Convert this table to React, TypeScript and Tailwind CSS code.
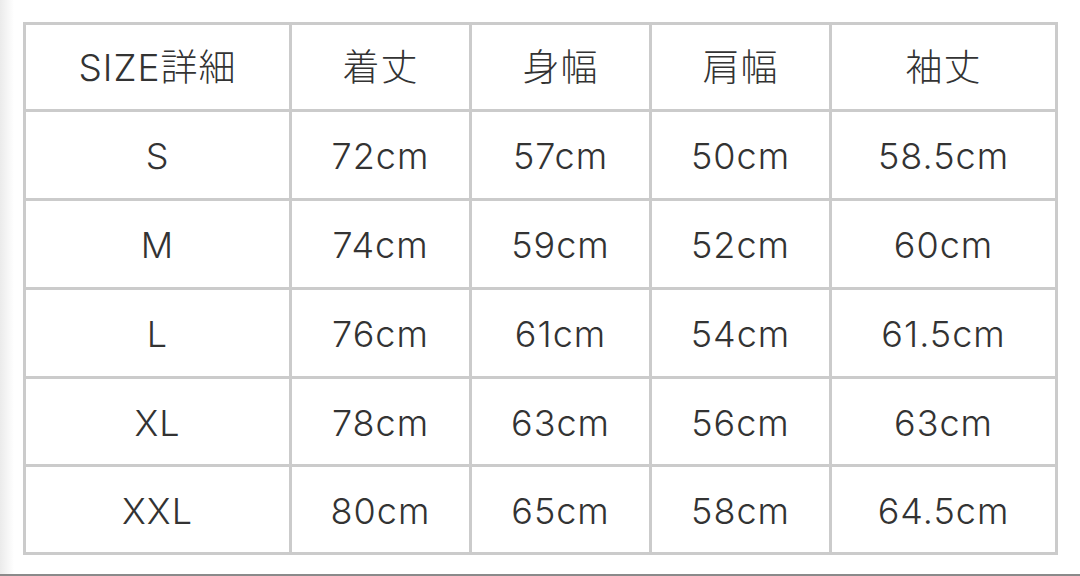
const HEADERS = ['SIZE詳細', '着丈', '身幅', '肩幅', '袖丈'];

const ROWS: string[][] = [
  ['S', '72cm', '57cm', '50cm', '58.5cm'],
  ['M', '74cm', '59cm', '52cm', '60cm'],
  ['L', '76cm', '61cm', '54cm', '61.5cm'],
  ['XL', '78cm', '63cm', '56cm', '63cm'],
  ['XXL', '80cm', '65cm', '58cm', '64.5cm'],
];

const Cell = ({ text, head }: { text: string; head?: boolean }) => (
  <div
    className={`flex items-center justify-center bg-white pt-[2px] font-light tracking-[1px] text-[#333] ${
      head ? 'text-[37px]' : 'text-[36px]'
    }`}
  >
    {text}
  </div>
);

export default function App(): React.JSX.Element {
  return (
    <div
      className="flex h-[576px] w-[1080px] flex-col overflow-hidden bg-white"
      style={{ fontFamily: 'Inter, "Noto Sans CJK JP", sans-serif' }}
    >
      <div className="flex flex-1">
        <div className="w-[14px] bg-gradient-to-r from-[#ebebeb] to-white" />
        <div className="pl-[9px] pt-[22px]">
          <div className="grid grid-cols-[263px_177px_177px_177px_223px] grid-rows-[84px_86px_86px_86px_85px_85px] gap-[3px] border-[3px] border-[#cbcbcb] bg-[#cbcbcb]">
            {HEADERS.map((h) => (
              <Cell key={h} text={h} head />
            ))}
            {ROWS.map((row) =>
              row.map((value, i) => <Cell key={row[0] + i} text={value} />),
            )}
          </div>
        </div>
      </div>
      <div className="h-[2px] bg-[#8a8a8a]" />
    </div>
  );
}
